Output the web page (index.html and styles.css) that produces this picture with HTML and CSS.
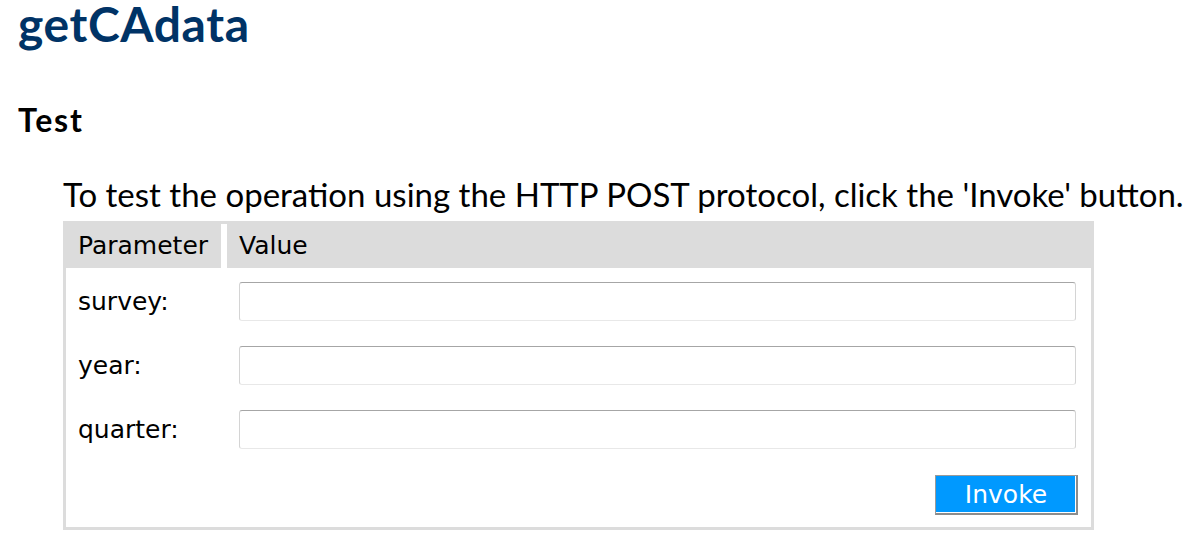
FILE: index.html
```html
<!DOCTYPE html>
<html>
<head>
<meta charset="utf-8">
<title>getCAdata</title>
<link rel="stylesheet" href="styles.css">
</head>
<body>
<div class="page">
  <h1 class="title">getCAdata</h1>
  <h2 class="subtitle">Test</h2>
  <div class="content">
    <p class="intro">To test the operation using the HTTP POST protocol, click the 'Invoke' button.</p>
    <form class="params">
      <div class="head">
        <div class="th">Parameter</div>
        <div class="th">Value</div>
      </div>
      <div class="row">
        <label class="label">survey:</label>
        <div class="value"><input class="field" type="text"></div>
      </div>
      <div class="row">
        <label class="label">year:</label>
        <div class="value"><input class="field" type="text"></div>
      </div>
      <div class="row">
        <label class="label">quarter:</label>
        <div class="value"><input class="field" type="text"></div>
      </div>
      <div class="actions">
        <button class="invoke" type="button">Invoke</button>
      </div>
    </form>
  </div>
</div>
</body>
</html>
```
FILE: styles.css
```css
html, body {
  margin: 0;
  padding: 0;
  background: #ffffff;
}

.page {
  padding: 0 0 0 18px;
  font-family: Lato, "Open Sans", sans-serif;
  color: #000;
}

.title {
  margin: 0;
  font-size: 48px;
  line-height: 48px;
  font-weight: 700;
  letter-spacing: 0.6px;
  color: #003366;
}

.subtitle {
  margin: 56px 0 0 0;
  font-size: 32px;
  line-height: 32px;
  font-weight: 700;
  letter-spacing: 1.8px;
  color: #000;
}

.content {
  margin-left: 45px;
}

.intro {
  margin: 42px 0 0 0;
  font-size: 33px;
  line-height: 33px;
  font-weight: 400;
  white-space: nowrap;
}

.params {
  margin-top: 10px;
  width: 1031px;
  box-sizing: border-box;
  border: 3px solid #dcdcdc;
  font-family: "DejaVu Sans", Verdana, sans-serif;
  font-size: 25px;
}

.head {
  display: grid;
  grid-template-columns: 155px 1fr;
  column-gap: 6px;
  height: 44px;
}

.th {
  background: #dcdcdc;
  padding-left: 12px;
  line-height: 44px;
}

.row {
  display: flex;
  align-items: center;
  padding: 14px 0 11px 0;
}

.label {
  width: 161px;
  box-sizing: border-box;
  padding-left: 12px;
  line-height: 30px;
}

.value {
  flex: 1;
  padding: 0 15px 0 12px;
}

.field {
  display: block;
  width: 100%;
  height: 39px;
  box-sizing: border-box;
  margin: 0;
  border: 1px solid #d4d4d4;
  border-top-color: #a6a6a6;
  border-bottom-color: #e8e8e8;
  border-radius: 3px;
  background: #fff;
  padding: 0 6px;
  font-family: "DejaVu Sans", sans-serif;
  font-size: 20px;
}

.actions {
  display: flex;
  justify-content: flex-end;
  padding: 15px 13px 12px 0;
}

.invoke {
  width: 143px;
  height: 40px;
  box-sizing: border-box;
  margin: 0;
  padding: 0;
  background: #0099ff;
  color: #ffffff;
  font-family: "DejaVu Sans", Verdana, sans-serif;
  font-size: 25px;
  line-height: 36px;
  border-style: solid;
  border-width: 1px 2px 2px 1px;
  border-color: #9a9a9a #8c8c8c #8c8c8c #9a9a9a;
  box-shadow: inset -1px -1px 0 #ffffff;
}
```
